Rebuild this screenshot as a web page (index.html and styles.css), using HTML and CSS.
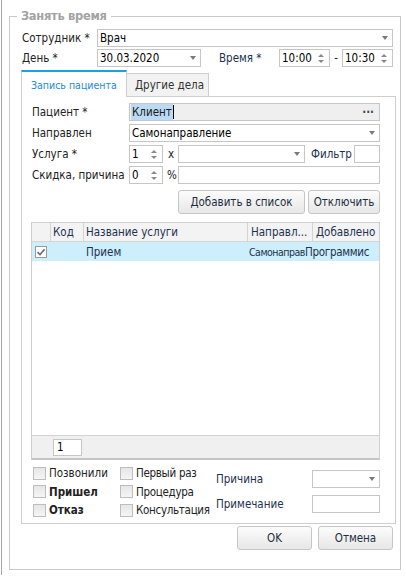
FILE: index.html
```html
<!DOCTYPE html>
<html lang="ru">
<head>
<meta charset="utf-8">
<title>Занять время</title>
<link rel="stylesheet" href="styles.css">
</head>
<body>
<div class="window">
  <fieldset class="group">
    <legend>Занять время</legend>

    <div class="row">
      <span class="lbl lbl-main">Сотрудник *</span>
      <div class="combo grow"><span class="val">Врач</span><i class="arrow"></i></div>
    </div>

    <div class="row">
      <span class="lbl lbl-main">День *</span>
      <div class="combo date"><span class="val">30.03.2020</span><i class="arrow"></i></div>
      <span class="lbl lbl-time blue">Время *</span>
      <div class="spin time"><span class="val">10:00</span><i class="spinbtn"><b class="up"></b><b class="down"></b></i></div>
      <span class="dash">-</span>
      <div class="spin time"><span class="val">10:30</span><i class="spinbtn"><b class="up"></b><b class="down"></b></i></div>
    </div>

    <div class="tabs">
      <div class="tabbar">
        <div class="tab active">Запись пациента</div>
        <div class="tab">Другие дела</div>
      </div>
      <div class="panel">
        <div class="prow">
          <span class="plbl">Пациент *</span>
          <div class="edit readonly grow"><span class="sel">Клиент</span><span class="caret"></span><span class="dots">···</span></div>
        </div>
        <div class="prow">
          <span class="plbl">Направлен</span>
          <div class="combo grow"><span class="val">Самонаправление</span><i class="arrow"></i></div>
        </div>
        <div class="prow">
          <span class="plbl">Услуга *</span>
          <div class="spin small"><span class="val">1</span><i class="spinbtn"><b class="up"></b><b class="down"></b></i></div>
          <span class="mid">x</span>
          <div class="combo service"><span class="val"></span><i class="arrow"></i></div>
          <span class="plbl filter blue">Фильтр</span>
          <div class="edit grow"></div>
        </div>
        <div class="prow">
          <span class="plbl">Скидка, причина</span>
          <div class="spin small"><span class="val">0</span><i class="spinbtn"><b class="up"></b><b class="down"></b></i></div>
          <span class="mid pct">%</span>
          <div class="edit grow"></div>
        </div>
        <div class="btnrow">
          <button class="btn add">Добавить в список</button>
          <button class="btn off">Отключить</button>
        </div>

        <div class="table">
          <div class="thead">
            <div class="th"></div>
            <div class="th">Код</div>
            <div class="th">Название услуги</div>
            <div class="th">Направл...</div>
            <div class="th">Добавлено</div>
          </div>
          <div class="tbody">
            <div class="tr">
              <div class="td"><span class="tick"><svg width="10" height="10" viewBox="0 0 10 10"><path d="M1.5 5.2 L4 7.6 L8.6 2.2" fill="none" stroke="#6a6a6a" stroke-width="1.6"/></svg></span></div>
              <div class="td"></div>
              <div class="td">Прием</div>
              <div class="td narrow">Самонаправ</div>
              <div class="td last">Программис</div>
            </div>
          </div>
          <div class="tfoot">
            <div class="pager">1</div>
          </div>
        </div>

        <div class="bottom">
          <div class="checks c1">
            <label class="chk"><span class="box"></span>Позвонили</label>
            <label class="chk bold"><span class="box"></span>Пришел</label>
            <label class="chk bold"><span class="box"></span>Отказ</label>
          </div>
          <div class="checks c2">
            <label class="chk"><span class="box"></span>Первый раз</label>
            <label class="chk"><span class="box"></span>Процедура</label>
            <label class="chk"><span class="box"></span>Консультация</label>
          </div>
          <div class="fields">
            <div class="frow">
              <span class="flbl blue">Причина</span>
              <div class="combo fctl"><span class="val"></span><i class="arrow"></i></div>
            </div>
            <div class="frow">
              <span class="flbl blue">Примечание</span>
              <div class="edit fctl"></div>
            </div>
          </div>
        </div>
      </div>
    </div>

    <div class="actions">
      <button class="btn big">OK</button>
      <button class="btn big">Отмена</button>
    </div>
  </fieldset>
</div>
</body>
</html>
```
FILE: styles.css
```css
* { box-sizing: border-box; }
html, body { margin: 0; padding: 0; background: #fff; }
body {
  width: 406px;
  height: 580px;
  overflow: hidden;
  font-family: "DejaVu Sans Condensed", "DejaVu Sans", sans-serif;
  font-size: 11.5px;
  color: #222;
}
.window {
  margin-left: 1px;
  height: 575px;
  border-left: 1px solid #a8a8a8;
  padding: 9px 0 0 7px;
}
.group {
  margin: 0;
  width: 392px;
  border: 1px solid #c9c9c9;
  padding: 5px 4px 19px 11px;
  min-width: 0;
}
.group legend {
  margin-left: -4px;
  padding: 0 4px;
  font-family: "DejaVu Sans", sans-serif;
  font-weight: bold;
  font-size: 11.5px;
  letter-spacing: -0.3px;
  line-height: 15px;
  color: #a3a3a3;
}
.blue { color: #1d3150; }
.row {
  display: flex;
  align-items: center;
  height: 18px;
  padding: 0 3px 0 1px;
  margin-bottom: 2px;
}
.lbl-main { width: 75px; white-space: nowrap; }
.grow { flex: 1; }
.combo, .spin, .edit {
  height: 18px;
  border: 1px solid #c6c6c6;
  background: #fff;
  display: flex;
  align-items: center;
  padding-left: 2px;
  color: #000;
}
.val { flex: 1; white-space: nowrap; overflow: hidden; }
.arrow {
  width: 0; height: 0;
  border-top: 4px solid #7a7a7a;
  border-left: 3px solid transparent;
  border-right: 3px solid transparent;
  margin-right: 4px;
}
.date { width: 104px; }
.lbl-time { width: 78px; padding-left: 18px; white-space: nowrap; }
.time { width: 51px; }
.dash { width: 12px; text-align: center; }
.spinbtn {
  display: flex;
  flex-direction: column;
  align-items: center;
  gap: 3px;
  margin-right: 5px;
}
.spinbtn b { display: block; width: 0; height: 0; border-left: 3px solid transparent; border-right: 3px solid transparent; }
.spinbtn .up { border-bottom: 3px solid #8a8a8a; }
.spinbtn .down { border-top: 3px solid #8a8a8a; }

.tabs { margin-top: 3px; }
.tabbar { display: flex; align-items: flex-end; height: 26px; }
.tab {
  height: 23px;
  padding: 0 0 0 8px;
  border: 1px solid #cfcfcf;
  border-left: 0;
  border-bottom: 0;
  background: #f2f2f2;
  display: flex;
  align-items: center;
  color: #333;
  width: 82px;
  white-space: nowrap;
}
.tab.active {
  position: relative;
  z-index: 1;
  width: 106px;
  height: 27px;
  margin-bottom: -1px;
  border-left: 1px solid #cfcfcf;
  border-top: 2px solid #1ba1e6;
  background: #fff;
  color: #1a8bd6;
  padding: 0 0 0 9px;
  font-size: 10.5px;
}
.panel {
  height: 428px;
  border: 1px solid #cfcfcf;
  padding: 6px 15px 0 9px;
}
.prow {
  display: flex;
  align-items: center;
  height: 18px;
  margin-bottom: 3px;
}
.plbl { width: 98px; padding-left: 1px; white-space: nowrap; }
.readonly { background: #efefef; padding-left: 1px; }
.sel { background: #bcdaf3; color: #1a1a1a; padding: 0 1px; line-height: 16px; }
.caret { width: 1px; height: 14px; background: #000; }
.dots { margin-left: auto; margin-right: 5px; color: #444; font-weight: bold; }
.small { width: 34px; }
.mid { width: 15px; padding-left: 5px; }
.pct { padding-left: 4px; }
.service { width: 127px; }
.filter { width: 49px; padding-left: 6px; }
.btnrow {
  display: flex;
  justify-content: flex-end;
  gap: 3px;
  margin-top: 6px;
}
.btn {
  font: inherit;
  height: 24px;
  border: 1px solid #c6c6c6;
  border-radius: 3px;
  background: linear-gradient(#fcfcfc, #e7e7e7);
  color: #1e2e42;
  padding: 0;
  white-space: nowrap;
}
.add { width: 127px; }
.off { width: 72px; }

.table {
  margin-top: 8px;
  height: 238px;
  border: 1px solid #cfcfcf;
  border-bottom: 0;
  display: flex;
  flex-direction: column;
}
.thead {
  display: grid;
  grid-template-columns: 18px 33px 164px 65px 1fr;
  height: 19px;
  background: #f3f3f3;
  border-bottom: 1px solid #d4d4d4;
}
.th {
  border-left: 1px solid #d4d4d4;
  padding-left: 2px;
  line-height: 18px;
  white-space: nowrap;
  overflow: hidden;
  color: #1d3150;
}
.th:first-child { border-left: 0; }
.th:nth-child(4), .th:nth-child(5) { padding-left: 3px; }
.tbody { flex: 1; background: #fff; }
.tr {
  display: grid;
  grid-template-columns: 18px 33px 164px 58px 1fr;
  height: 19px;
  background: #cdeefb;
  align-items: center;
}
.td { padding-left: 3px; white-space: nowrap; overflow: hidden; color: #1d3150; }
.td.narrow { font-size: 10.5px; letter-spacing: -0.5px; padding-left: 2px; }
.td.last { padding-left: 0; letter-spacing: -0.3px; }
.tick {
  display: flex;
  align-items: center;
  justify-content: center;
  width: 12px; height: 12px;
  border: 1px solid #9a9a9a;
  background: #fff;
}
.tfoot {
  height: 25px;
  background: #f0f0f0;
  border-top: 1px solid #d4d4d4;
  border-bottom: 2px solid #c4c4c4;
  padding: 3px 0 0 21px;
}
.pager {
  width: 29px; height: 17px;
  border: 1px solid #c6c6c6;
  background: #fff;
  padding-left: 3px;
  line-height: 15px;
  color: #000;
}

.bottom { display: flex; }
.checks { display: flex; flex-direction: column; padding-top: 4px; }
.c1 { width: 89px; padding-left: 2px; }
.c2 { width: 96px; }
.c2 .chk { letter-spacing: -0.3px; }
.chk { display: flex; align-items: center; height: 18.5px; white-space: nowrap; color: #222; }
.chk.bold { font-weight: bold; }
.box {
  width: 13px; height: 13px;
  border: 1px solid #bdbdbd;
  background: linear-gradient(#e6e6e6, #f5f5f5);
  margin-right: 3px;
}
.fields { flex: 1; padding-top: 10px; display: flex; flex-direction: column; gap: 7px; }
.frow { display: flex; align-items: center; }
.flbl { width: 96px; }
.fctl { width: 68px; height: 18px; }

.actions {
  display: flex;
  justify-content: flex-end;
  gap: 6px;
  margin-top: 2px;
  padding-right: 3px;
}
.big { width: 75px; }
```
